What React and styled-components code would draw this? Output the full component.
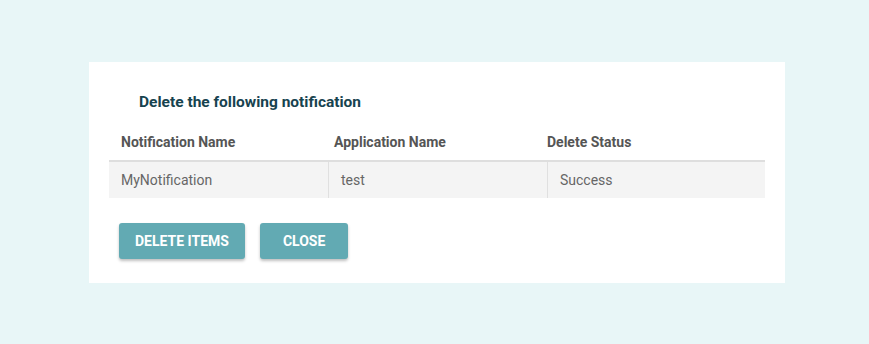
import React from "react";
import styled, { createGlobalStyle } from "styled-components";

const Global = createGlobalStyle`
  html, body { margin: 0; padding: 0; background: #e8f6f7; }
  body { font-family: Roboto, "Liberation Sans", Arial, sans-serif; }
`;

const Page = styled.div`
  width: 869px;
  height: 344px;
  padding: 62px 0 0 89px;
  box-sizing: border-box;
`;

const Panel = styled.div`
  width: 696px;
  height: 221px;
  background: #fff;
  box-sizing: border-box;
  padding: 30px 20px 0 20px;
  display: flex;
  flex-direction: column;
`;

const Title = styled.h3`
  margin: 0 0 0 30px;
  font-size: 15.5px;
  line-height: 20px;
  font-weight: 700;
  color: #17434f;
`;

const HeaderRow = styled.div`
  margin-top: 12px;
  display: grid;
  grid-template-columns: 213px 213px 230px;
  height: 36px;
  align-items: center;
  border-bottom: 2px solid #dedede;
`;

const HeaderCell = styled.div`
  padding-left: 12px;
  font-size: 14px;
  font-weight: 700;
  color: #555;
`;

const BodyRow = styled.div`
  display: grid;
  grid-template-columns: 219px 219px 218px;
  height: 36px;
  background: #f4f4f4;
`;

const BodyCell = styled.div`
  display: flex;
  align-items: center;
  padding-left: 12px;
  font-size: 14px;
  color: #666;
  border-left: ${(p) => (p.$first ? "none" : "1px solid #e0e0e0")};
`;

const Actions = styled.div`
  display: flex;
  gap: 15px;
  margin: 25px 0 0 10px;
`;

const Button = styled.button`
  height: 36px;
  padding: 0 ${(p) => p.$px}px;
  background: #62aab3;
  color: #fff;
  border: none;
  border-radius: 3px;
  font-family: Roboto, "Liberation Sans", Arial, sans-serif;
  font-size: 14px;
  font-weight: 700;
  box-shadow: 0 2px 3px rgba(0, 0, 0, 0.25);
  cursor: pointer;
`;

export default function App() {
  return (
    <>
      <Global />
      <Page>
        <Panel>
          <Title>Delete the following notification</Title>
          <HeaderRow>
            <HeaderCell>Notification Name</HeaderCell>
            <HeaderCell>Application Name</HeaderCell>
            <HeaderCell>Delete Status</HeaderCell>
          </HeaderRow>
          <BodyRow>
            <BodyCell $first>MyNotification</BodyCell>
            <BodyCell>test</BodyCell>
            <BodyCell>Success</BodyCell>
          </BodyRow>
          <Actions>
            <Button $px={16}>DELETE ITEMS</Button>
            <Button $px={23}>CLOSE</Button>
          </Actions>
        </Panel>
      </Page>
    </>
  );
}
